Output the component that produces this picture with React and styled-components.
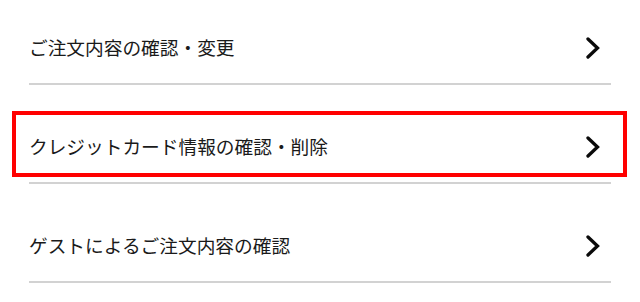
import styled, { createGlobalStyle } from 'styled-components';

const GlobalStyle = createGlobalStyle`
  body {
    margin: 0;
    background: #fff;
    font-family: "Noto Sans CJK JP", "Noto Sans", sans-serif;
    color: #1e1e1e;
  }
`;

const Page = styled.div`
  width: 640px;
  height: 302px;
  overflow: hidden;
  background: #fff;
`;

const MenuList = styled.ul`
  list-style: none;
  margin: 0 29px;
  padding: 0;
`;

const MenuItem = styled.li`
  position: relative;
  padding: 26px 0 5px;
  border-bottom: 2px solid #d2d2d2;

  &:first-child {
    padding-top: 12px;
  }
`;

const MenuLink = styled.a`
  display: flex;
  align-items: center;
  justify-content: space-between;
  height: 66px;
  padding: 5px 11px 0 0;
  box-sizing: border-box;
  font-size: 18.7px;
  line-height: 1;
  color: #1a1a1a;
  text-decoration: none;
`;

// red annotation frame laid over the selected row
const Highlight = styled.span`
  position: absolute;
  left: -17px;
  right: -16px;
  top: 26px;
  height: 66px;
  border: 4px solid #ff0000;
  box-sizing: border-box;
  pointer-events: none;
`;

const Chevron = () => (
  <svg width="14" height="22" viewBox="0 0 14 22" fill="none">
    <polyline
      points="2,2 11.5,11 2,20"
      stroke="#0a0a0a"
      strokeWidth="3.3"
      strokeLinecap="round"
      strokeLinejoin="miter"
    />
  </svg>
);

const items = [
  { label: 'ご注文内容の確認・変更' },
  { label: 'クレジットカード情報の確認・削除', active: true },
  { label: 'ゲストによるご注文内容の確認' },
];

function App() {
  return (
    <Page>
      <GlobalStyle />
      <MenuList>
        {items.map((item) => (
          <MenuItem key={item.label}>
            <MenuLink href="#">
              <span>{item.label}</span>
              <Chevron />
            </MenuLink>
            {item.active && <Highlight />}
          </MenuItem>
        ))}
      </MenuList>
    </Page>
  );
}

export default App;
